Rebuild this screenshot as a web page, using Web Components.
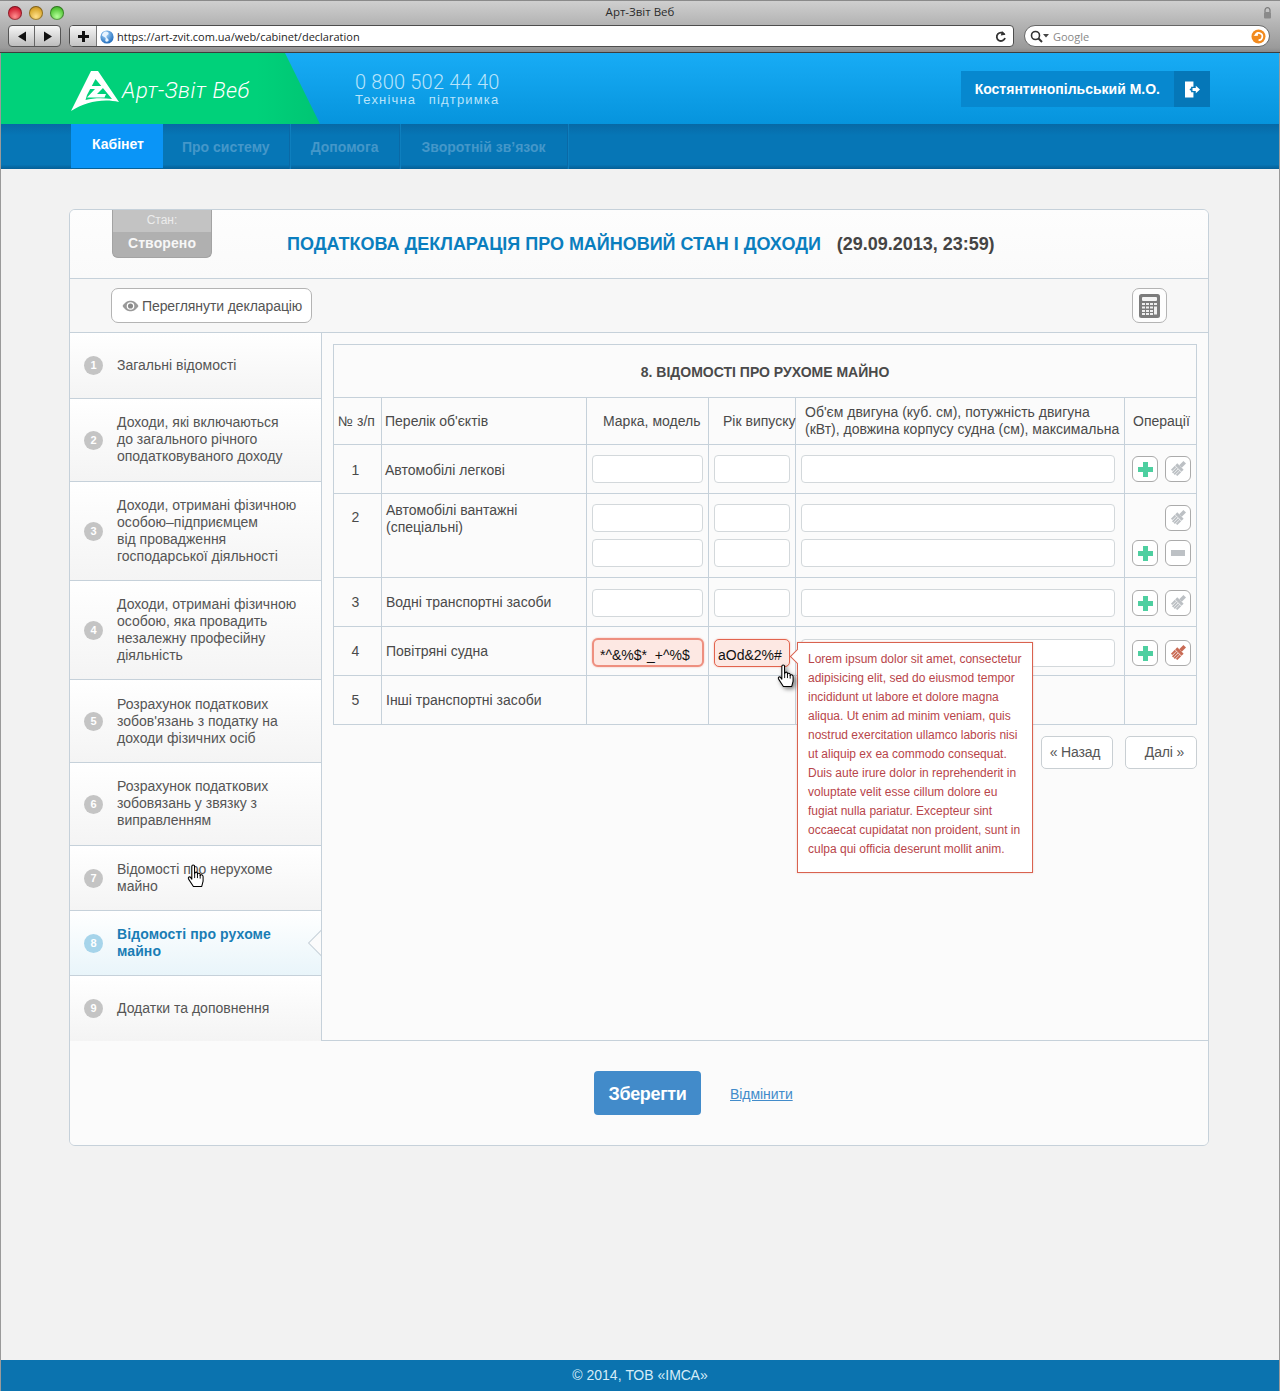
<!DOCTYPE html>
<html lang="uk">
<head>
<meta charset="utf-8">
<title>Арт-Звіт Веб</title>
<style>
html,body{margin:0;padding:0;background:#f2f2f2}
body{font:14px/17px "Liberation Sans",Arial,sans-serif;color:#444}
</style>
</head>
<body>
<x-app>
  <mac-chrome slot="chrome"></mac-chrome>
  <site-header slot="header"></site-header>
  <site-nav slot="nav"></site-nav>
  <decl-card>
    <status-tab slot="head"></status-tab>
    <decl-title slot="head"></decl-title>
    <view-btn slot="tools"></view-btn>
    <calc-btn slot="tools"></calc-btn>
    <side-item slot="side" n="1" h="66">Загальні відомості</side-item>
    <side-item slot="side" n="2" h="83" up>Доходи, які включаються<br>до загального річного<br>оподатковуваного доходу</side-item>
    <side-item slot="side" n="3" h="99">Доходи, отримані фізичною<br>особою–підприємцем<br>від провадження<br>господарської діяльності</side-item>
    <side-item slot="side" n="4" h="99">Доходи, отримані фізичною<br>особою, яка провадить<br>незалежну професійну<br>діяльність</side-item>
    <side-item slot="side" n="5" h="83">Розрахунок податкових<br>зобов'язань з податку на<br>доходи фізичних осіб</side-item>
    <side-item slot="side" n="6" h="83" up>Розрахунок податкових<br>зобовязань у звязку з<br>виправленням</side-item>
    <side-item slot="side" n="7" h="65">Відомості про нерухоме<br>майно</side-item>
    <side-item slot="side" n="8" h="65" active>Відомості про рухоме<br>майно</side-item>
    <side-item slot="side" n="9" h="65">Додатки та доповнення</side-item>
    <hand-cursor slot="side" style="left:117px;top:531px"></hand-cursor>
    <decl-table slot="main"></decl-table>
    <pager-row slot="main"></pager-row>
    <error-tip slot="main">Lorem ipsum dolor sit amet, consectetur<br>adipisicing elit, sed do eiusmod tempor<br>incididunt ut labore et dolore magna<br>aliqua. Ut enim ad minim veniam, quis<br>nostrud exercitation ullamco laboris nisi<br>ut aliquip ex ea commodo consequat.<br>Duis aute irure dolor in reprehenderit in<br>voluptate velit esse cillum dolore eu<br>fugiat nulla pariatur. Excepteur sint<br>occaecat cupidatat non proident, sunt in<br>culpa qui officia deserunt mollit anim.</error-tip>
    <hand-cursor slot="main" shadow style="left:455px;top:331px"></hand-cursor>
    <save-bar slot="foot"></save-bar>
  </decl-card>
  <site-footer slot="footer"></site-footer>
</x-app>
<script>
function def(name, css, html, init){
  customElements.define(name, class extends HTMLElement{
    constructor(){
      super();
      const r=this.attachShadow({mode:'open'});
      const h=typeof html==='function'?html(this):html;
      r.innerHTML='<style>'+css+'</style>'+h;
    }
    connectedCallback(){ if(init) init(this,this.shadowRoot); }
  });
}
const SANS='"Liberation Sans",Arial,sans-serif';
const BORDER='#c6d1da';

def('x-app',`
  :host{display:flex;flex-direction:column;min-height:1391px;box-sizing:border-box;border-left:1px solid #9a9a9a;border-right:1px solid #9a9a9a;background:#f2f2f2}
  main{flex:1;padding:40px 0 0 68px}
`,`<slot name="chrome"></slot><slot name="header"></slot><slot name="nav"></slot><main><slot></slot></main><slot name="footer"></slot>`);

def('mac-chrome',`
  :host{display:block;height:53px;box-sizing:border-box;margin:0 -1px;background:linear-gradient(#cfcfcf,#b4b4b4 45%,#9a9a9a 92%,#8a8a8a);border-top:1px solid #8a8a8a;border-bottom:1px solid #3d3d3d;font:11px/14px "Open Sans","DejaVu Sans",sans-serif;color:#222}
  .title{height:23px;display:flex;align-items:center;position:relative;padding-left:8px}
  .dots{display:flex;gap:7px}
  .dot{width:14px;height:14px;border-radius:50%;box-shadow:inset 0 0 0 1px rgba(0,0,0,.35)}
  .r{background:radial-gradient(circle at 50% 75%,#ff8f8f,#d8273a 60%,#a5142a)}
  .y{background:radial-gradient(circle at 50% 75%,#ffe08a,#dba930 60%,#aa7a16)}
  .g{background:radial-gradient(circle at 50% 75%,#b5ff9a,#58c93c 60%,#2f9a1f)}
  .t{flex:1;text-align:center;padding-right:47px;font-size:11.500px;color:#2b2b2b;margin-top:-2px}
  .lock{margin-right:8px;display:block}
  .bar{height:22px;display:flex;align-items:stretch;padding:0 10px 0 8px;margin-top:1px}
  .seg{display:flex;width:53px;border:1px solid #555;border-radius:4px;background:linear-gradient(#f6f6f6,#bdbdbd);box-sizing:border-box}
  .seg i{flex:1;display:flex;align-items:center;justify-content:center}
  .seg i+i{border-left:1px solid #666}
  .url{flex:1;margin-left:8px;display:flex;border:1px solid #4d4d4d;border-radius:4px;background:#fff;overflow:hidden;box-sizing:border-box;align-items:center}
  .plus{width:27px;align-self:stretch;background:linear-gradient(#f6f6f6,#c4c4c4);border-right:1px solid #777;display:flex;align-items:center;justify-content:center;box-sizing:border-box}
  .u{flex:1;padding:1px 0 0 3px;color:#1e1e1e;font-size:11px;display:flex;align-items:center;gap:3px}
  .reload{margin-right:6px}
  .search{width:246px;margin-left:10px;border:1px solid #666;border-radius:11px;background:#fff;display:flex;align-items:center;box-sizing:border-box;padding:0 3px 0 5px;gap:3px;color:#888;font-size:11px}
  .search span{flex:1;padding-top:1px}
`,`<div class="title"><div class="dots"><div class="dot r"></div><div class="dot y"></div><div class="dot g"></div></div><div class="t">Арт-Звіт Веб</div>
<svg class="lock" width="9" height="12" viewBox="0 0 9 12"><path d="M2 5V3.200a2.500 2.500 0 0 1 5 0V5" fill="none" stroke="#7a7a7a" stroke-width="1.200"/><rect x="1" y="5" width="7" height="6.500" rx="1" fill="#8a8a8a"/></svg></div>
<div class="bar">
  <div class="seg"><i><svg width="10" height="11"><path d="M9 0.500V10.500L1 5.500Z" fill="#111"/></svg></i><i><svg width="10" height="11"><path d="M1 0.500V10.500L9 5.500Z" fill="#111"/></svg></i></div>
  <div class="url"><div class="plus"><svg width="11" height="11"><path d="M4 0h3v4h4v3H7v4H4V7H0V4h4z" fill="#111"/></svg></div>
    <div class="u"><svg width="14" height="14" viewBox="0 0 14 14"><defs><radialGradient id="gl" cx=".4" cy=".3" r=".8"><stop offset="0" stop-color="#a9d7fb"/><stop offset="1" stop-color="#0f5fb5"/></radialGradient></defs><circle cx="7" cy="7" r="6.600" fill="url(#gl)"/><path d="M5 1.500c3 0 4 1 3.500 2.500S6 5 6.500 7s2.500 1.500 2 4c-2 1.500-4 .5-3-1.500S4 7 2.500 6 3.500 2 5 1.500z" fill="#e8f4ff"/></svg><span>https://art-zvit.com.ua/web/cabinet/declaration</span></div>
    <svg class="reload" width="12" height="13" viewBox="0 0 12 13"><path d="M9.500 4.500A4.200 4.200 0 1 0 10 8" fill="none" stroke="#333" stroke-width="1.800"/><path d="M7 1l3.500 3.800L5.800 5.500z" fill="#333"/></svg></div>
  <div class="search"><svg width="20" height="13" viewBox="0 0 20 13"><circle cx="5.500" cy="5.500" r="4" fill="none" stroke="#333" stroke-width="1.600"/><path d="M8.500 8.500l3.500 3.500" stroke="#333" stroke-width="2"/><path d="M13 4h6l-3 3.500z" fill="#444"/></svg><span>Google</span>
    <svg width="15" height="15" viewBox="0 0 15 15"><circle cx="7.500" cy="7.500" r="7" fill="#f28a1e"/><path d="M4.500 6.500A3.500 3.500 0 1 1 7.500 11" fill="none" stroke="#fff" stroke-width="1.700"/><path d="M2.500 6.800h4.500L6.800 3z" fill="#fff"/></svg></div>
</div>`);

def('site-header',`
  :host{display:flex;height:71px;background:linear-gradient(#18acf5,#0694dd);font-family:${SANS};color:#fff}
  .brand{width:319px;flex:none;background:linear-gradient(to right,#00d17a 80%,#00c573);clip-path:polygon(0 0,284px 0,319px 100%,0 100%);display:flex;align-items:center;padding-left:70px;box-sizing:border-box;gap:3px}
  .brand svg{margin-top:4px;flex:none}
  .name{font:italic 300 22px/28px Roboto,sans-serif;letter-spacing:.55px;white-space:nowrap;margin-top:5px;color:#fff}
  .phone{margin-left:35px;padding-top:19px;color:#b9e4fb}
  .num{font:300 20px/21px Roboto,sans-serif;letter-spacing:.2px}
  .sup{font:13px/14px ${SANS};letter-spacing:1.150px;word-spacing:8px}
  .user{margin:18px 69px 0 auto;height:36px;display:flex;background:#0788cf}
  .user b{font-size:14px;line-height:36px;padding:0 14px;white-space:nowrap}
  .out{width:36px;background:#0577b8;display:flex;align-items:center;justify-content:center}
`,`<div class="brand"><svg width="48" height="40" viewBox="0 0 48 40"><path d="M20 0h7l21 31C32 27 14 31 0 40z" fill="#fff"/><path d="M24.500 8 L41 28 C31 26.500 22 27 14.500 29 L16 24z" fill="#00d17a"/><path d="M19 15h15l-8 8h9l-1.500 3.500H16l8-8.500h-6.500z" fill="#fff"/></svg><span class="name">Арт-Звіт Веб</span></div>
<div class="phone"><div class="num">0 800 502 44 40</div><div class="sup">Технічна підтримка</div></div>
<div class="user"><b>Костянтинопільський М.О.</b><div class="out"><svg width="15" height="17" viewBox="0 0 16 17"><path d="M0 0h9v5.500H6.500v6H9V17H0z" fill="#fff"/><path d="M8 7h3.500V4.500L16 8.500l-4.500 4V10H8z" fill="#fff"/><circle cx="6" cy="8.500" r="1" fill="#0577b8"/></svg></div></div>`);

def('site-nav',`
  :host{display:flex;height:45px;padding-left:70px;box-sizing:border-box;background:linear-gradient(#0769a6,#0676b6 25%,#0676b6 90%,#055f96);font:bold 14px/45px ${SANS}}
  a{display:block;color:#4497c9;border-right:1px solid #0a69a6;box-shadow:1px 0 0 #0e7fbe;white-space:nowrap;padding-top:1px}
  a.on{background:#0a95f7;color:#fff;width:92px;box-sizing:border-box;padding:0 0 0 21px;line-height:41px;border-right:0;box-shadow:none;height:44px}
  a:nth-of-type(2){padding-left:19px;padding-right:19px}
  a:nth-of-type(3){padding-left:21px;padding-right:20px}
  a:nth-of-type(4){padding-left:22px;padding-right:21px}
`,`<a class="on">Кабінет</a><a>Про систему</a><a>Допомога</a><a>Зворотній зв’язок</a>`);

def('decl-card',`
  :host{display:block;width:1140px;box-sizing:border-box;border:1px solid ${BORDER};border-radius:6px;background:#fbfbfb;overflow:hidden}
  .head{height:69px;display:flex;align-items:center;padding-left:42px;box-sizing:border-box;border-bottom:1px solid ${BORDER};background:linear-gradient(#fdfdfd,#fafafa)}
  .tools{height:54px;display:flex;align-items:center;justify-content:space-between;padding:0 41px 0 41px;box-sizing:border-box;border-bottom:1px solid ${BORDER};background:#f7f7f7}
  .body{display:flex;height:708px;border-bottom:1px solid ${BORDER};box-sizing:border-box}
  .side{width:252px;flex:none;box-sizing:border-box;border-right:1px solid ${BORDER};position:relative;box-shadow:inset -2px 0 2px -1px #eee}
  .main{flex:1;padding:11px 11px 0;position:relative;min-width:0}
`,`<div class="head"><slot name="head"></slot></div><div class="tools"><slot name="tools"></slot></div>
<div class="body"><div class="side"><slot name="side"></slot></div><div class="main"><slot name="main"></slot></div></div><slot name="foot"></slot>`);

def('status-tab',`
  :host{display:block;width:100px;height:48px;align-self:flex-start;box-sizing:border-box;background:#b0b0b0;border:1px solid #a3a3a3;border-top:0;border-radius:0 0 6px 6px;color:#fff;text-align:center;font-family:${SANS};overflow:hidden}
  .a{height:22px;background:#c3c3c3;font-size:12px;line-height:21px;color:#ececec}
  .b{font:bold 14px/22px ${SANS};letter-spacing:.1px;color:#f7f7f7}
`,`<div class="a">Стан:</div><div class="b">Створено</div>`);

def('decl-title',`
  :host{display:block;margin:-1px 0 0 75px;font:bold 18px/22px ${SANS};white-space:nowrap;color:#444;letter-spacing:-.02px}
  span{color:#0a7ebe;margin-right:16px}
`,`<span>ПОДАТКОВА ДЕКЛАРАЦІЯ ПРО МАЙНОВИЙ СТАН І ДОХОДИ</span>(29.09.2013, 23:59)`);

def('view-btn',`
  :host{display:flex;align-items:center;gap:3px;height:35px;width:201px;box-sizing:border-box;padding:1px 0 0 10px;border:1px solid #b4b4b4;border-radius:7px;background:#fff;font:14px/17px ${SANS};color:#555;white-space:nowrap;letter-spacing:-.09px}
`,`<svg width="17" height="12" viewBox="0 0 16 11"><path d="M.5 5.500C3 1.500 5.500.5 8 .5s5 1 7.500 5c-2.500 4-5 5-7.500 5s-5-1-7.500-5z" fill="#999"/><circle cx="8" cy="5.500" r="3.600" fill="#fff"/><circle cx="8" cy="5.500" r="2.400" fill="#888"/></svg><span>Переглянути декларацію</span>`);

def('calc-btn',`
  :host{display:flex;align-items:center;justify-content:center;width:35px;height:35px;box-sizing:border-box;border:1px solid #b4b4b4;border-radius:7px;background:#fdfdfd}
`,`<svg width="21" height="24" viewBox="0 0 21 24"><rect width="21" height="24" rx="2.500" fill="#7c7c7c"/><rect x="3" y="3" width="15" height="4" rx="1" fill="#f5f5f5"/><g fill="#efefef"><rect x="3" y="9" width="3" height="2"/><rect x="7" y="9" width="3" height="2"/><rect x="11" y="9" width="3" height="2"/><rect x="15" y="9" width="3" height="2"/><rect x="3" y="12.500" width="3" height="2"/><rect x="7" y="12.500" width="3" height="2"/><rect x="11" y="12.500" width="3" height="2"/><rect x="15" y="12.500" width="3" height="8"/><rect x="3" y="16" width="3" height="2"/><rect x="7" y="16" width="3" height="2"/><rect x="11" y="16" width="3" height="2"/><rect x="3" y="19" width="3" height="2"/><rect x="7" y="19" width="3" height="2"/><rect x="11" y="19" width="3" height="2"/></g></svg>`);

def('side-item',`
  :host{display:flex;align-items:center;box-sizing:border-box;padding-left:14px;gap:14px;border-bottom:1px solid ${BORDER};background:linear-gradient(#fff,#f4f4f4);font:14px/17px ${SANS};color:#555;position:relative;overflow:hidden}
  :host(:last-of-type){border-bottom:0}
  .n{width:19px;height:19px;flex:none;border-radius:50%;background:#c4c4c4;color:#fff;font:bold 11px/19px ${SANS};text-align:center}
  :host([up]) .t{margin-top:-2px}
  :host([active]){background:linear-gradient(#fff,#e9f5fa);color:#1a7db5;font-weight:bold;letter-spacing:.1px}
  :host([active]) .n{background:#a6d4ea}
  .notch{display:none;position:absolute;right:-11px;top:50%;width:20px;height:20px;margin-top:-10px;transform:rotate(45deg);background:#fbfbfb;border:1px solid ${BORDER};box-sizing:border-box}
  :host([active]) .notch{display:block}
`,(el)=>`<div class="n">${el.getAttribute('n')}</div><div class="t"><slot></slot></div><div class="notch"></div>`,(el)=>{el.style.height=el.getAttribute('h')+'px'});

def('hand-cursor',`
  :host{display:block;position:absolute;width:18px;height:24px;z-index:5}
  :host([shadow]) svg{filter:drop-shadow(2px 2px 2px rgba(0,0,0,.5))}
`,`<svg width="18" height="24" viewBox="0 0 17 23"><path d="M4.500 2.300Q4.500 1 5.800 1T7.100 2.300V9L7.400 9Q7.500 7.800 8.700 7.800T9.900 9V9.800Q10.200 8.800 11.300 8.900T12.500 10.300V11Q12.900 10 14 10.300T15.300 12V16.500L14 21.500H6L1.400 14.500Q.7 13 1.800 12.500T3.600 13.300L4.500 14.500Z" fill="#fff" stroke="#000" stroke-width="1" stroke-linejoin="round"/><path d="M7.200 9v4.500M9.900 9.500v4M12.500 10.500v3.500" stroke="#000" stroke-width=".9" fill="none"/></svg>`);

def('text-field',`
  :host{display:block;height:28px;box-sizing:border-box;border:1px solid #d3d8db;border-radius:4px;background:#fff;font:14px/26px ${SANS};color:#111;white-space:nowrap;overflow:hidden}
  :host([error]){border:1px solid #e2644e;background:#fde8e3;box-shadow:0 0 2px #f3b4a6;line-height:30px;border-radius:5px}
  :host([error][wide]){border:2px solid #ee8f7f;border-radius:6px;height:29px;width:112px !important;margin-top:-1px;line-height:30px}
`,`<slot></slot>`);

const BRUSH=c=>`<svg width="16" height="16" viewBox="0 0 16 16" style="overflow:visible"><g fill="${c}" transform="rotate(45 8 8)"><rect x="6.200" y="-1.500" width="3.600" height="6"/><rect x="3.500" y="4.500" width="9" height="3"/><path d="M3.500 8h2v5.500h-2zM6 8h1.800v6.500H6zM8.300 8h1.800v6.500H8.300zM10.500 8h2v5.500h-2z"/></g></svg>`;
def('icon-btn',`
  :host{display:flex;align-items:center;justify-content:center;width:26px;height:26px;box-sizing:border-box;border:1px solid #ababab;border-radius:6px;background:#fff}
`,(el)=>{
  const k=el.getAttribute('k');
  if(k==='plus')return `<svg width="15" height="15"><path d="M5 0h5v5h5v5h-5v5H5v-5H0V5h5z" fill="#4ecfa0"/></svg>`;
  if(k==='minus')return `<svg width="14" height="6"><rect width="14" height="6" fill="#bdc1c5"/></svg>`;
  if(k==='brushred')return BRUSH('#c96b55');
  return BRUSH('#bcc0c4');
});

def('decl-table',`
  :host{display:block;font:14px/17px ${SANS};color:#4a4a4a}
  table{border-collapse:separate;border-spacing:0;table-layout:fixed;width:864px;border-top:1px solid ${BORDER};border-left:1px solid ${BORDER}}
  td,th{border-right:1px solid ${BORDER};border-bottom:1px solid ${BORDER};padding:0;font-weight:normal;text-align:left}
  th.title{font-weight:bold;text-align:center;padding-top:2px}
  tr.h th{white-space:nowrap}
  tr.r>td{vertical-align:top}
  th.num{text-align:center;padding-right:2px}
  td.num{text-align:center;padding-right:4px}
  .stack{display:flex;flex-direction:column;gap:7px}
  .ops{display:flex;flex-direction:column;gap:9px;padding-left:7px}
  .opr{display:flex;gap:7px;justify-content:flex-end;width:59px}
  .f1{width:111px;margin-left:5px}.f2{width:76px;margin-left:5px}.f3{width:314px;margin-left:5px}
`,()=>{
  const rows=[
    {n:1,name:'Автомобілі легкові',p:10,tx:17,nx:3,fields:1,ops:[['plus','brush']],nt:17},
    {n:2,name:'Автомобілі вантажні<br>(спеціальні)',p:10,tx:8,nx:4,fields:2,ops:[[null,'brush'],['plus','minus']],nt:15},
    {n:3,name:'Водні транспортні засоби',p:11,tx:16,nx:4,fields:1,ops:[['plus','brush']]},
    {n:4,name:'Повітряні судна',p:12,tx:16,nx:4,fields:1,err:1,ops:[['plus','brushred']]},
    {n:5,name:'Інші транспортні засоби',p:0,tx:16,nx:4,fields:0,ops:[]},
  ];
  const fld=(c,t,e)=>`<text-field class="${c}"${e?' error':''}${e&&c==='f1'?' wide':''}>${t?`<span style="padding-left:${c==='f1'?6:3}px">${t}</span>`:''}</text-field>`;
  const body=rows.map(r=>{
    const col=(c,t)=>{let s='';for(let i=0;i<r.fields;i++)s+=fld(c,t,r.err&&!!t);return `<td style="padding-top:${r.p}px"><div class="stack">${s}</div></td>`};
    const ops=r.ops.map(o=>`<div class="opr">${o.map(k=>k?`<icon-btn k="${k}"></icon-btn>`:'').join('')}</div>`).join('');
    return `<tr class="r" style="height:${r.n===2?84:49}px"><td class="num" style="padding-top:${r.nt||16}px">${r.n}</td><td style="padding-left:${r.nx}px;padding-top:${r.tx}px">${r.name}</td>${col('f1',r.err?'*^&amp;%$*_+^%$':'')}${col('f2',r.err?'aOd&amp;2%#':'')}${col('f3')}<td style="padding-top:${r.p+1}px"><div class="ops">${ops}</div></td></tr>`;
  }).join('');
  return `<table><colgroup><col style="width:48px"><col style="width:205px"><col style="width:122px"><col style="width:87px"><col style="width:329px"><col style="width:72px"></colgroup>
  <tr style="height:53px"><th class="title" colspan="6">8. ВІДОМОСТІ ПРО РУХОМЕ МАЙНО</th></tr>
  <tr class="h" style="height:47px"><th class="num">№ з/п</th><th style="padding-left:3px">Перелік об'єктів</th><th style="padding-left:16px">Марка, модель</th><th style="padding-left:14px">Рік випуску</th><th style="padding-left:9px;white-space:nowrap">Об'єм двигуна (куб. см), потужність двигуна<br>(кВт), довжина корпусу судна (см), максимальна</th><th style="padding-left:8px">Операції</th></tr>
  ${body}</table>`;
});

def('pager-row',`
  :host{display:flex;justify-content:flex-end;gap:12px;margin-top:11px;width:864px}
  a{display:block;width:72px;height:33px;box-sizing:border-box;border:1px solid #c9cfd3;border-radius:5px;background:#fff;text-align:center;font:14px/31px ${SANS};color:#555;letter-spacing:-.15px}
  a:first-of-type{padding-right:4px}
  a:last-of-type{padding-left:7px}
`,`<a>« Назад</a><a>Далі »</a>`);

def('error-tip',`
  :host{display:block;position:absolute;left:475px;top:309px;width:236px;height:231px;box-sizing:border-box;border:1px solid #d9624f;background:#fff;padding:7px 0 0 10px;font:12px/19px ${SANS};color:#b8454a;z-index:4;white-space:nowrap;box-shadow:0 0 2px rgba(200,90,70,.3)}
  .arrow{position:absolute;left:-6px;top:8px;width:10px;height:10px;background:#fff;border-left:1px solid #d9624f;border-bottom:1px solid #d9624f;transform:rotate(45deg)}
`,`<div class="arrow"></div><slot></slot>`);

def('save-bar',`
  :host{display:flex;align-items:center;height:104px;padding-left:524px;gap:29px;box-sizing:border-box;background:#fbfbfb;font-family:${SANS}}
  a.s{display:block;width:107px;height:44px;background:#428bca;border-radius:4px;color:#fff;font:bold 18px/46px ${SANS};text-align:center;letter-spacing:-.35px}
  a.c{font-size:14px;line-height:17px;color:#428bca;text-decoration:underline;margin-top:3px;letter-spacing:-.05px}
`,`<a class="s">Зберегти</a><a class="c">Відмінити</a>`);

def('site-footer',`
  :host{display:block;height:31px;background:#0b73af;color:#d5ecf8;text-align:center;font:14px/31px ${SANS}}
`,`© 2014, ТОВ «ІМСА»`);
</script>
</body>
</html>
